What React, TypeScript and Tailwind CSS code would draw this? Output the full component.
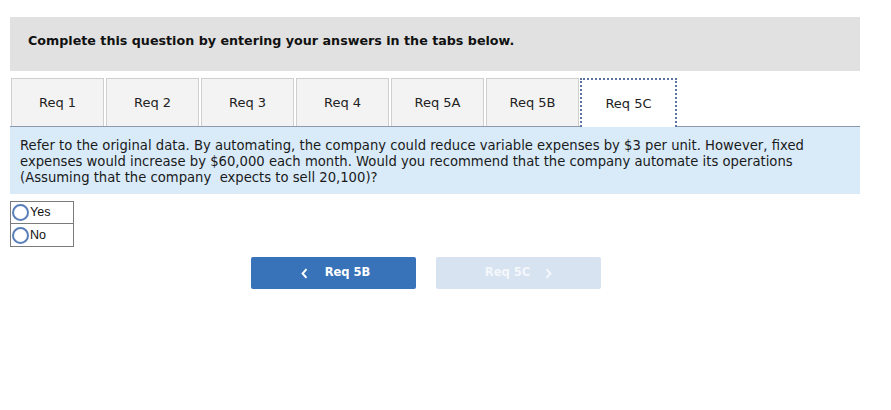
const tabs = ["Req 1", "Req 2", "Req 3", "Req 4", "Req 5A", "Req 5B", "Req 5C"];

export default function App() {
  return (
    <div className="w-[891px] h-[410px] bg-white text-black" style={{ fontFamily: "Verdana, 'DejaVu Sans', sans-serif" }}>
      <div className="pt-[17px] pl-[10px] w-[860px]">
        {/* Instruction header */}
        <div className="h-[54px] bg-[#e1e1e1] pl-[18px] pt-[16px] text-[12.7px] leading-[16px] font-bold text-[#111]">
          Complete this question by entering your answers in the tabs below.
        </div>

        {/* Tabs */}
        <div className="mt-[7px] flex gap-[2px] pl-px h-[48px]">
          {tabs.map((t, i) =>
            i === tabs.length - 1 ? (
              <div
                key={t}
                className="w-[97px] h-[49px] -ml-px bg-white border-2 border-dotted border-[#5b74a0] border-b-0 flex items-center justify-center text-[13px] text-[#222] relative z-10"
              >
                {t}
              </div>
            ) : (
              <div
                key={t}
                className="w-[93px] bg-[#f3f3f3] border border-[#cfcfcf] border-b-0 flex items-center justify-center text-[13px] text-[#222]"
              >
                {t}
              </div>
            )
          )}
        </div>

        {/* Question */}
        <div className="bg-[#d9ebf9] border-t border-[#8b9aac] h-[68px] px-[10px] pt-[11px] text-[13.2px] leading-[16px] text-[#1a1a1a]">
          Refer to the original data. By automating, the company could reduce variable expenses by $3 per unit. However, fixed
          <br />
          expenses would increase by $60,000 each month. Would you recommend that the company automate its operations
          <br />
          (Assuming that the company&nbsp; expects to sell 20,100)?
        </div>

        {/* Answer options */}
        <div className="mt-[7px] w-[64px] border border-[#7b7b7b] text-[12.5px] text-[#111]" style={{ fontFamily: "Arial, 'Liberation Sans', sans-serif" }}>
          {["Yes", "No"].map((o, i) => (
            <div key={o} className={"h-[22px] flex items-center pl-px " + (i === 0 ? "border-b border-[#7b7b7b]" : "")}>
              <span className="w-[17px] h-[17px] rounded-full border-[2.5px] border-[#5a7fb8] bg-white inline-block" />
              <span className="ml-px">{o}</span>
            </div>
          ))}
        </div>

        {/* Navigation */}
        <div className="mt-[10px] flex pl-[241px] gap-[20px]">
          <button className="w-[165px] h-[32px] rounded-[2px] bg-[#3872b9] text-white font-bold text-[11.5px] flex items-center justify-center gap-[17px] pl-[4px]" style={{ fontFamily: "Tahoma, 'DejaVu Sans', sans-serif" }}>
            <svg width="7" height="11" viewBox="0 0 7 11"><path d="M5.5 1.2 1.6 5.5l3.9 4.3" fill="none" stroke="white" strokeWidth="2" /></svg>
            <span>Req 5B</span>
          </button>
          <button className="w-[165px] h-[32px] rounded-[2px] bg-[#d7e3f1] text-[#f4f7fb] font-bold text-[11.5px] flex items-center justify-center gap-[15px]" style={{ fontFamily: "Tahoma, 'DejaVu Sans', sans-serif" }}>
            <span>Req 5C</span>
            <svg width="7" height="11" viewBox="0 0 7 11"><path d="M1.5 1.2 5.4 5.5l-3.9 4.3" fill="none" stroke="#f4f7fb" strokeWidth="2" /></svg>
          </button>
        </div>
      </div>
    </div>
  );
}
